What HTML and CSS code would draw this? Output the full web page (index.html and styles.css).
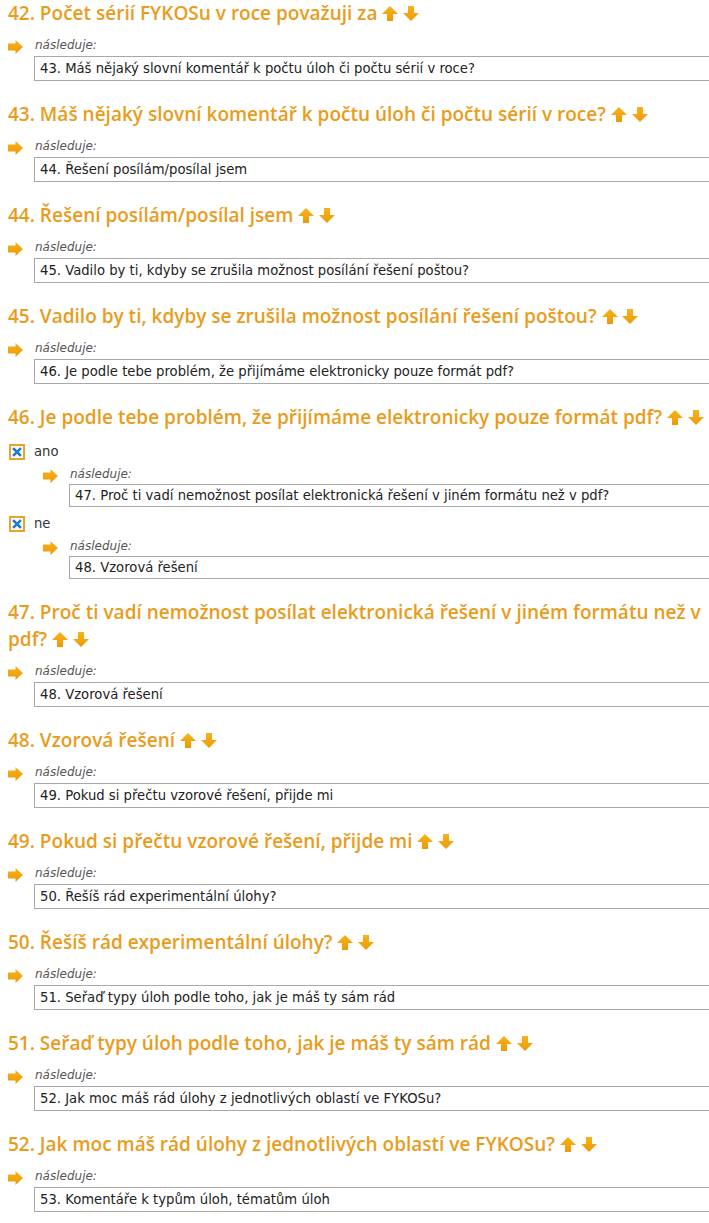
FILE: index.html
```html
<!DOCTYPE html>
<html lang="cs">
<head>
<meta charset="utf-8">
<title>Otázky</title>
<link rel="stylesheet" href="styles.css">
</head>
<body>
<svg class="defs" width="0" height="0" aria-hidden="true">
  <defs>
    <linearGradient id="og" x1="0" y1="0" x2="0" y2="1">
      <stop offset="0" stop-color="#f7b21c"/>
      <stop offset="1" stop-color="#ec9a05"/>
    </linearGradient>
    <symbol id="up" viewBox="0 0 16 15"><path d="M8 0 L16 8 L11 8 L11 15 L5 15 L5 8 L0 8 Z" fill="url(#og)"/></symbol>
    <symbol id="down" viewBox="0 0 16 15"><path d="M5 0 L11 0 L11 7 L16 7 L8 15 L0 7 L5 7 Z" fill="url(#og)"/></symbol>
    <symbol id="right" viewBox="0 0 15 14"><path d="M0 3.5 L7.5 3.5 L7.5 0 L15 7 L7.5 14 L7.5 10.5 L0 10.5 Z" fill="url(#og)"/></symbol>
    <symbol id="chk" viewBox="0 0 16 16"><rect x="1" y="1" width="14" height="14" fill="#fff" stroke="#eaa22a" stroke-width="2"/><path d="M5 5 L11 11 M11 5 L5 11" stroke="#1f7fc9" stroke-width="2.6" stroke-linecap="square"/></symbol>
  </defs>
</svg>

<div class="q">
  <h2 class="q-title">42. Počet sérií FYKOSu v roce považuji za <svg class="mv"><use href="#up"/></svg> <svg class="mv"><use href="#down"/></svg></h2>
  <div class="next"><svg class="ra"><use href="#right"/></svg><div class="next-body"><div class="next-label">následuje:</div><div class="next-box">43. Máš nějaký slovní komentář k počtu úloh či počtu sérií v roce?</div></div></div>
</div>

<div class="q">
  <h2 class="q-title">43. Máš nějaký slovní komentář k počtu úloh či počtu sérií v roce? <svg class="mv"><use href="#up"/></svg> <svg class="mv"><use href="#down"/></svg></h2>
  <div class="next"><svg class="ra"><use href="#right"/></svg><div class="next-body"><div class="next-label">následuje:</div><div class="next-box">44. Řešení posílám/posílal jsem</div></div></div>
</div>

<div class="q">
  <h2 class="q-title">44. Řešení posílám/posílal jsem <svg class="mv"><use href="#up"/></svg> <svg class="mv"><use href="#down"/></svg></h2>
  <div class="next"><svg class="ra"><use href="#right"/></svg><div class="next-body"><div class="next-label">následuje:</div><div class="next-box">45. Vadilo by ti, kdyby se zrušila možnost posílání řešení poštou?</div></div></div>
</div>

<div class="q">
  <h2 class="q-title">45. Vadilo by ti, kdyby se zrušila možnost posílání řešení poštou? <svg class="mv"><use href="#up"/></svg> <svg class="mv"><use href="#down"/></svg></h2>
  <div class="next"><svg class="ra"><use href="#right"/></svg><div class="next-body"><div class="next-label">následuje:</div><div class="next-box">46. Je podle tebe problém, že přijímáme elektronicky pouze formát pdf?</div></div></div>
</div>

<div class="q">
  <h2 class="q-title">46. Je podle tebe problém, že přijímáme elektronicky pouze formát pdf? <svg class="mv"><use href="#up"/></svg> <svg class="mv"><use href="#down"/></svg></h2>
  <div class="opt"><svg class="cb"><use href="#chk"/></svg><span class="opt-text">ano</span></div>
  <div class="next next-sub"><svg class="ra"><use href="#right"/></svg><div class="next-body"><div class="next-label">následuje:</div><div class="next-box">47. Proč ti vadí nemožnost posílat elektronická řešení v jiném formátu než v pdf?</div></div></div>
  <div class="opt opt-2"><svg class="cb"><use href="#chk"/></svg><span class="opt-text">ne</span></div>
  <div class="next next-sub"><svg class="ra"><use href="#right"/></svg><div class="next-body"><div class="next-label">následuje:</div><div class="next-box">48. Vzorová řešení</div></div></div>
</div>

<div class="q">
  <h2 class="q-title">47. Proč ti vadí nemožnost posílat elektronická řešení v jiném formátu než v pdf? <svg class="mv"><use href="#up"/></svg> <svg class="mv"><use href="#down"/></svg></h2>
  <div class="next"><svg class="ra"><use href="#right"/></svg><div class="next-body"><div class="next-label">následuje:</div><div class="next-box">48. Vzorová řešení</div></div></div>
</div>

<div class="q">
  <h2 class="q-title">48. Vzorová řešení <svg class="mv"><use href="#up"/></svg> <svg class="mv"><use href="#down"/></svg></h2>
  <div class="next"><svg class="ra"><use href="#right"/></svg><div class="next-body"><div class="next-label">následuje:</div><div class="next-box">49. Pokud si přečtu vzorové řešení, přijde mi</div></div></div>
</div>

<div class="q">
  <h2 class="q-title">49. Pokud si přečtu vzorové řešení, přijde mi <svg class="mv"><use href="#up"/></svg> <svg class="mv"><use href="#down"/></svg></h2>
  <div class="next"><svg class="ra"><use href="#right"/></svg><div class="next-body"><div class="next-label">následuje:</div><div class="next-box">50. Řešíš rád experimentální úlohy?</div></div></div>
</div>

<div class="q">
  <h2 class="q-title">50. Řešíš rád experimentální úlohy? <svg class="mv"><use href="#up"/></svg> <svg class="mv"><use href="#down"/></svg></h2>
  <div class="next"><svg class="ra"><use href="#right"/></svg><div class="next-body"><div class="next-label">následuje:</div><div class="next-box">51. Seřaď typy úloh podle toho, jak je máš ty sám rád</div></div></div>
</div>

<div class="q">
  <h2 class="q-title">51. Seřaď typy úloh podle toho, jak je máš ty sám rád <svg class="mv"><use href="#up"/></svg> <svg class="mv"><use href="#down"/></svg></h2>
  <div class="next"><svg class="ra"><use href="#right"/></svg><div class="next-body"><div class="next-label">následuje:</div><div class="next-box">52. Jak moc máš rád úlohy z jednotlivých oblastí ve FYKOSu?</div></div></div>
</div>

<div class="q">
  <h2 class="q-title">52. Jak moc máš rád úlohy z jednotlivých oblastí ve FYKOSu? <svg class="mv"><use href="#up"/></svg> <svg class="mv"><use href="#down"/></svg></h2>
  <div class="next"><svg class="ra"><use href="#right"/></svg><div class="next-body"><div class="next-label">následuje:</div><div class="next-box">53. Komentáře k typům úloh, tématům úloh</div></div></div>
</div>
</body>
</html>
```
FILE: styles.css
```css
html, body {
  background: #fff;
}
body {
  margin: 0 0 0 8px;
  font-family: "DejaVu Sans", Verdana, sans-serif;
  font-size: 13.2px;
  color: #222;
  overflow-x: hidden;
}
.defs {
  position: absolute;
  width: 0;
  height: 0;
}
.q {
  margin-bottom: 20px;
}
.q-title {
  margin: 0;
  font-family: "Open Sans", sans-serif;
  font-weight: 600;
  font-size: 19px;
  line-height: 27px;
  color: #e99c1b;
}
.mv {
  width: 16px;
  height: 15px;
  vertical-align: -1px;
}
.next {
  display: flex;
  align-items: flex-start;
  margin-top: 10px;
}
.ra {
  flex: none;
  width: 15px;
  height: 14px;
  margin-top: 3px;
  margin-right: 11px;
}
.next-body {
  flex: 1;
  min-width: 0;
}
.next-label {
  font-style: italic;
  font-size: 12px;
  line-height: 16px;
  color: #555;
  padding-left: 1px;
}
.next-box {
  margin-top: 3px;
  border: 1px solid #a9a9a9;
  border-right: none;
  height: 23px;
  line-height: 23px;
  padding-left: 5px;
  white-space: nowrap;
}
.opt {
  display: flex;
  align-items: center;
  margin-top: 12px;
  height: 18px;
  line-height: 18px;
}
.opt-2 {
  margin-top: 8px;
}
.cb {
  width: 16px;
  height: 16px;
  margin-left: 1px;
  margin-right: 9px;
}
.opt-text {
  color: #333;
}
.next-sub {
  margin-top: 5px;
  margin-left: 35px;
}
.next-sub .next-box {
  margin-top: 2px;
  height: 21px;
  line-height: 21px;
}
```
